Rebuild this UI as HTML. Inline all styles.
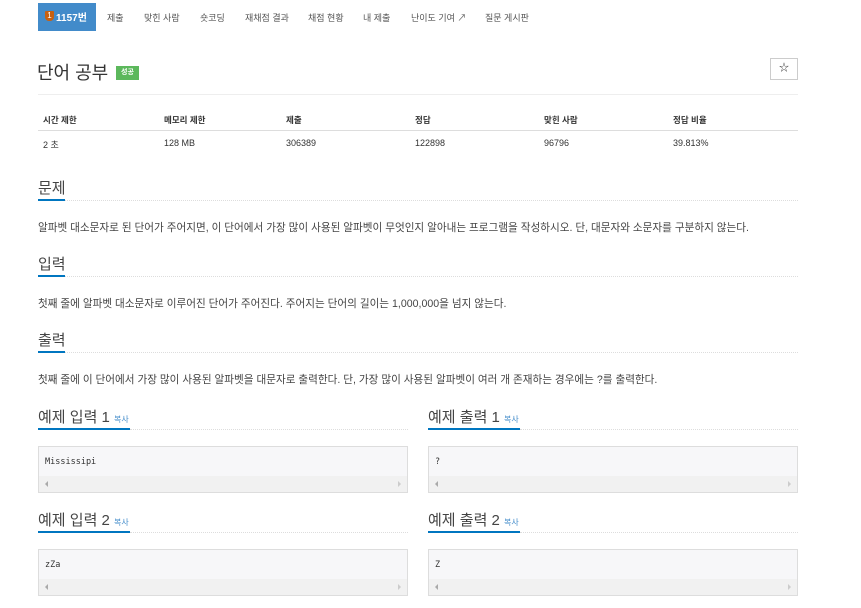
<!DOCTYPE html>
<html><head><meta charset="utf-8">
<style>
*{margin:0;padding:0;box-sizing:border-box}
body{width:861px;height:608px;background:#fff;font-family:"Liberation Sans","Noto Sans CJK KR",sans-serif;color:#333;position:relative;overflow:hidden}
.a{position:absolute;white-space:nowrap}
.nav{font-size:9px;color:#555;top:11px}
.h{font-size:15px;color:#444}
.ul{position:absolute;height:2px;background:#0076c0}
.dot{position:absolute;border-top:1px dotted #ddd;height:0}
.p{font-size:10.6px;color:#444}
.box{position:absolute;width:370px;height:47px;border:1px solid #ddd;background:#f7f7f9}
.box .t{position:absolute;left:6px;top:10px;font-family:"DejaVu Sans Mono","Liberation Mono",monospace;font-size:8.5px;color:#333}
.box .sb{position:absolute;left:0;right:0;bottom:0;height:16px;background:#f1f1f1}
.box .sb:before{content:"";position:absolute;left:6px;top:5px;border:3px solid transparent;border-right:3px solid #aaa;border-left:0}
.box .sb:after{content:"";position:absolute;right:6px;top:5px;border:3px solid transparent;border-left:3px solid #ccc;border-right:0}
.th{font-size:8.5px;font-weight:bold;top:114px;color:#333}
.td{font-size:9px;top:138px;color:#333}
.cp{font-size:8px;color:#428bca}
</style></head><body>
<div class="a" style="left:38px;top:3px;width:58px;height:28px;background:#428bca"></div>
<div class="a" style="left:45px;top:11px;width:9px;height:10px;background:#c86010;border-radius:1px 1px 4px 4px;color:#fff;font-size:8px;text-align:center;line-height:10px">1</div>
<div class="a" style="left:56px;top:9px;font-size:10px;color:#fff;font-weight:bold">1157번</div>
<div class="a nav" style="left:107px">제출</div>
<div class="a nav" style="left:144px">맞힌 사람</div>
<div class="a nav" style="left:200px">숏코딩</div>
<div class="a nav" style="left:245px">재채점 결과</div>
<div class="a nav" style="left:308px">채점 현황</div>
<div class="a nav" style="left:363px">내 제출</div>
<div class="a nav" style="left:411px">난이도 기여 ↗</div>
<div class="a nav" style="left:485px">질문 게시판</div>

<div class="a" style="left:37px;top:59px;font-size:18px;color:#333">단어 공부</div>
<div class="a" style="left:116px;top:66px;width:23px;height:14px;background:#5cb85c;color:#fff;font-size:7px;font-weight:bold;text-align:center;line-height:14px">성공</div>
<div class="a" style="left:770px;top:58px;width:28px;height:22px;border:1px solid #ccc;font-size:10px;text-align:center;line-height:20px">☆</div>
<div class="a" style="left:38px;top:94px;width:760px;height:1px;background:#eee"></div>

<div class="a th" style="left:43px">시간 제한</div>
<div class="a th" style="left:164px">메모리 제한</div>
<div class="a th" style="left:286px">제출</div>
<div class="a th" style="left:415px">정답</div>
<div class="a th" style="left:544px">맞힌 사람</div>
<div class="a th" style="left:673px">정답 비율</div>
<div class="a" style="left:38px;top:130px;width:760px;height:1px;background:#ddd"></div>
<div class="a td" style="left:43px">2 초</div>
<div class="a td" style="left:164px">128 MB</div>
<div class="a td" style="left:286px">306389</div>
<div class="a td" style="left:415px">122898</div>
<div class="a td" style="left:544px">96796</div>
<div class="a td" style="left:673px">39.813%</div>

<div class="a h" style="left:38px;top:177px">문제</div>
<div class="ul" style="left:38px;top:199px;width:27px"></div>
<div class="dot" style="left:65px;top:200px;width:733px"></div>
<div class="a p" style="left:38px;top:220px">알파벳 대소문자로 된 단어가 주어지면, 이 단어에서 가장 많이 사용된 알파벳이 무엇인지 알아내는 프로그램을 작성하시오. 단, 대문자와 소문자를 구분하지 않는다.</div>

<div class="a h" style="left:38px;top:253px">입력</div>
<div class="ul" style="left:38px;top:275px;width:27px"></div>
<div class="dot" style="left:65px;top:276px;width:733px"></div>
<div class="a p" style="left:38px;top:296px">첫째 줄에 알파벳 대소문자로 이루어진 단어가 주어진다. 주어지는 단어의 길이는 1,000,000을 넘지 않는다.</div>

<div class="a h" style="left:38px;top:329px">출력</div>
<div class="ul" style="left:38px;top:351px;width:27px"></div>
<div class="dot" style="left:65px;top:352px;width:733px"></div>
<div class="a p" style="left:38px;top:372px">첫째 줄에 이 단어에서 가장 많이 사용된 알파벳을 대문자로 출력한다. 단, 가장 많이 사용된 알파벳이 여러 개 존재하는 경우에는 ?를 출력한다.</div>

<div class="a h" style="left:38px;top:406px">예제 입력 1 <span class="cp">복사</span></div>
<div class="ul" style="left:38px;top:428px;width:92px"></div>
<div class="dot" style="left:130px;top:429px;width:278px"></div>
<div class="box" style="left:38px;top:446px"><div class="t">Mississipi</div><div class="sb"></div></div>

<div class="a h" style="left:428px;top:406px">예제 출력 1 <span class="cp">복사</span></div>
<div class="ul" style="left:428px;top:428px;width:92px"></div>
<div class="dot" style="left:520px;top:429px;width:278px"></div>
<div class="box" style="left:428px;top:446px"><div class="t">?</div><div class="sb"></div></div>

<div class="a h" style="left:38px;top:509px">예제 입력 2 <span class="cp">복사</span></div>
<div class="ul" style="left:38px;top:531px;width:92px"></div>
<div class="dot" style="left:130px;top:532px;width:278px"></div>
<div class="box" style="left:38px;top:549px"><div class="t">zZa</div><div class="sb"></div></div>

<div class="a h" style="left:428px;top:509px">예제 출력 2 <span class="cp">복사</span></div>
<div class="ul" style="left:428px;top:531px;width:92px"></div>
<div class="dot" style="left:520px;top:532px;width:278px"></div>
<div class="box" style="left:428px;top:549px"><div class="t">Z</div><div class="sb"></div></div>
</body></html>
